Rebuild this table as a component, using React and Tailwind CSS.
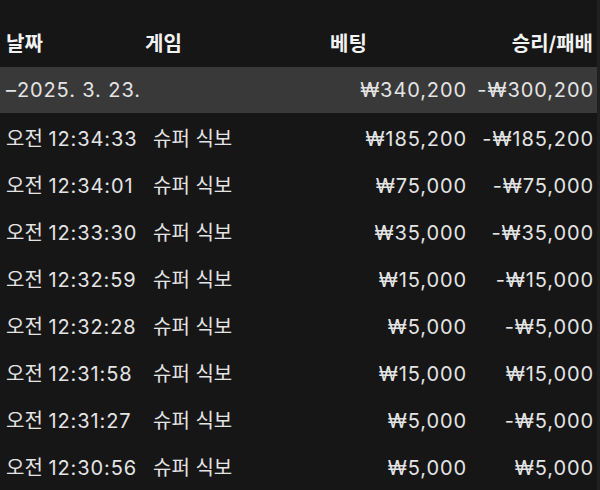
import React from 'react'

const rows = [
  { time: '12:34:33', game: '슈퍼 식보', bet: '₩185,200', result: '-₩185,200' },
  { time: '12:34:01', game: '슈퍼 식보', bet: '₩75,000', result: '-₩75,000' },
  { time: '12:33:30', game: '슈퍼 식보', bet: '₩35,000', result: '-₩35,000' },
  { time: '12:32:59', game: '슈퍼 식보', bet: '₩15,000', result: '-₩15,000' },
  { time: '12:32:28', game: '슈퍼 식보', bet: '₩5,000', result: '-₩5,000' },
  { time: '12:31:58', game: '슈퍼 식보', bet: '₩15,000', result: '₩15,000' },
  { time: '12:31:27', game: '슈퍼 식보', bet: '₩5,000', result: '-₩5,000' },
  { time: '12:30:56', game: '슈퍼 식보', bet: '₩5,000', result: '₩5,000' },
]

function App() {
  return (
    <div className="w-[600px] h-[490px] overflow-hidden bg-[#161616] font-['Inter','Noto_Sans_CJK_KR',sans-serif] text-[#e4e4e4] border-r-[3px] border-[#202020]">
      {/* Header */}
      <div className="flex items-center h-[67px] pt-[21px] pl-[6px] pr-[4px] text-[20px] font-semibold text-[#f2f2f2]">
        <div className="w-[139px]">날짜</div>
        <div className="flex-1">게임</div>
        <div className="w-[160px] pl-[24px]">베팅</div>
        <div className="w-[127px] text-right">승리/패배</div>
      </div>

      {/* Date summary row */}
      <div className="flex items-center h-[46px] bg-[#393939] pl-[6px] pr-[3px] text-[20px] tracking-[0.9px]">
        <div className="flex-1">–2025. 3. 23.</div>
        <div className="w-[160px] text-right">₩340,200</div>
        <div className="w-[127px] text-right">-₩300,200</div>
      </div>

      {rows.map((r, i) => (
        <div key={i} className="flex items-center h-[47px] pt-[4px] pl-[6px] pr-[3px] text-[20px]">
          <div className="w-[147px] whitespace-nowrap">
            오전 <span className="tracking-[0.9px]">{r.time}</span>
          </div>
          <div className="flex-1 whitespace-nowrap">{r.game}</div>
          <div className="w-[160px] text-right tracking-[0.9px]">{r.bet}</div>
          <div className="w-[127px] text-right tracking-[0.9px]">{r.result}</div>
        </div>
      ))}
    </div>
  )
}

export default App
